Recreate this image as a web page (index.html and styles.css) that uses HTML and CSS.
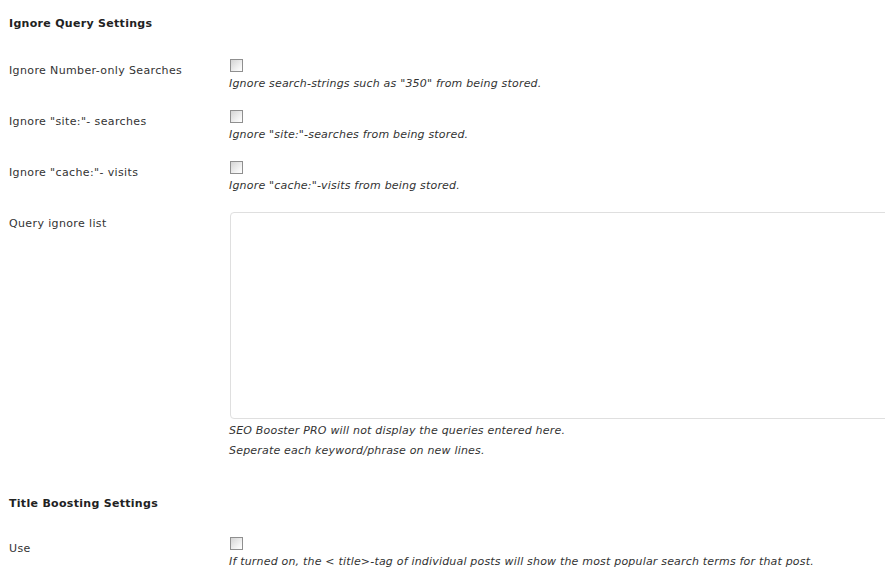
FILE: index.html
```html
<!DOCTYPE html>
<html lang="en">
<head>
    <meta charset="UTF-8">
    <meta name="viewport" content="width=device-width, initial-scale=1.0">
    <title>SEO Booster PRO Settings</title>
    <link rel="stylesheet" href="styles.css">
</head>
<body>

<div class="wrap">
    <h3 class="section-title first">Ignore Query Settings</h3>
    <div class="form-table">
        <div class="form-row">
            <label class="row-label" for="ignore_numbers">Ignore Number-only Searches</label>
            <div class="row-field">
                <input type="checkbox" id="ignore_numbers">
                <p class="description">Ignore search-strings such as "350" from being stored.</p>
            </div>
        </div>
        <div class="form-row">
            <label class="row-label" for="ignore_site">Ignore "site:"- searches</label>
            <div class="row-field">
                <input type="checkbox" id="ignore_site">
                <p class="description">Ignore "site:"-searches from being stored.</p>
            </div>
        </div>
        <div class="form-row">
            <label class="row-label" for="ignore_cache">Ignore "cache:"- visits</label>
            <div class="row-field">
                <input type="checkbox" id="ignore_cache">
                <p class="description">Ignore "cache:"-visits from being stored.</p>
            </div>
        </div>
        <div class="form-row">
            <label class="row-label" for="ignore_list">Query ignore list</label>
            <div class="row-field">
                <textarea id="ignore_list"></textarea>
                <p class="description tall">SEO Booster PRO will not display the queries entered here.</p>
                <p class="description tall">Seperate each keyword/phrase on new lines.</p>
            </div>
        </div>
    </div>

    <h3 class="section-title">Title Boosting Settings</h3>
    <div class="form-table">
        <div class="form-row">
            <label class="row-label" for="title_boost">Use</label>
            <div class="row-field">
                <input type="checkbox" id="title_boost">
                <p class="description">If turned on, the &lt; title&gt;-tag of individual posts will show the most popular search terms for that post.</p>
            </div>
        </div>
    </div>
</div>

</body>
</html>
```

FILE: styles.css
```css
html, body {
    overflow: hidden;
}
body {
    font-family: "DejaVu Sans", Verdana, sans-serif;
    font-size: 11px;
    line-height: 14px;
    color: #333;
    background-color: #fff;
    margin: 0;
    padding: 0;
}
.wrap {
    padding-left: 9px;
}
.section-title {
    font-size: 11px;
    line-height: 14px;
    font-weight: bold;
    letter-spacing: 0.3px;
    color: #222;
    margin: 25px 0 18px;
}
.section-title.first {
    margin-top: 17px;
    margin-bottom: 20px;
}
.form-row {
    display: grid;
    grid-template-columns: 221px 1fr;
}
.row-label {
    padding-top: 13px;
    letter-spacing: 0.37px;
}
.row-field {
    padding: 8px 0 11px;
    min-width: 0;
}
input[type="checkbox"] {
    appearance: none;
    -webkit-appearance: none;
    display: block;
    width: 13px;
    height: 13px;
    margin: 0;
    border: 1px solid #8f8f8f;
    background: linear-gradient(135deg, #d4d4d4 0%, #f4f4f4 70%, #fff 100%);
}
.description {
    font-style: italic;
    letter-spacing: 0.19px;
    margin: 5px 0 0 -1px;
    white-space: nowrap;
}
.description.tall {
    line-height: 20px;
    margin-top: 0;
}
textarea {
    display: block;
    box-sizing: border-box;
    width: 700px;
    height: 207px;
    margin: 0 0 2px;
    border: 1px solid #dfdfdf;
    border-radius: 4px;
    background-color: #fff;
    resize: none;
}
```
